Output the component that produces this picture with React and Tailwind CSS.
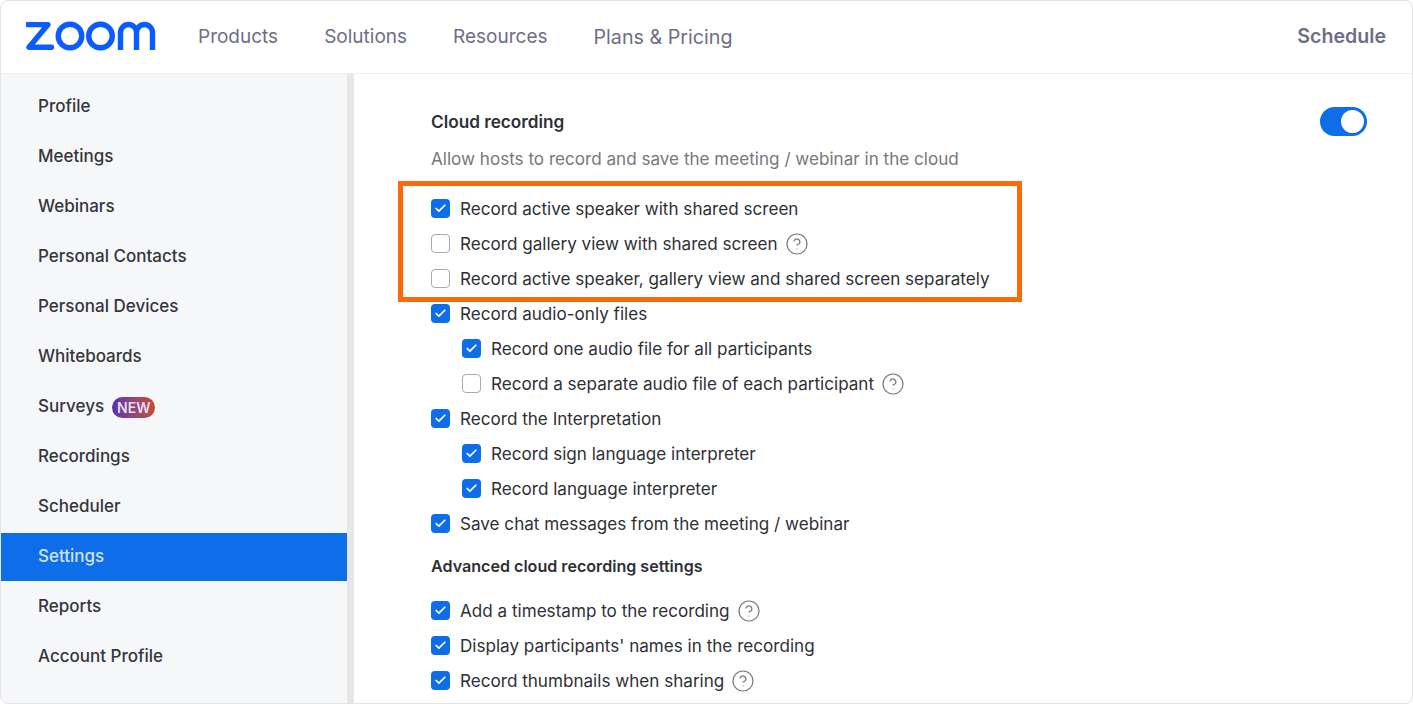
import { CircleHelp, Check } from "lucide-react";

const navItems = ["Products", "Solutions", "Resources"];

const sideItems = [
  "Profile",
  "Meetings",
  "Webinars",
  "Personal Contacts",
  "Personal Devices",
  "Whiteboards",
  "Surveys",
  "Recordings",
  "Scheduler",
  "Settings",
  "Reports",
  "Account Profile",
];

function ZoomLogo() {
  return (
    <svg width="130" height="30" viewBox="0 0 130 30" fill="none" stroke="#0b5cff" strokeWidth="5.4" className="mb-[3px]">
      <path d="M1.500 3.600h20.500L3 26.300h22.500" strokeLinejoin="round" strokeLinecap="round" />
      <circle cx="44" cy="15" r="11.800" />
      <circle cx="74.500" cy="15" r="11.800" />
      <path d="M94.500 29V11.500a8 8 0 0 1 16 0V29M110.500 11.500a8 8 0 0 1 16 0V29" />
    </svg>
  );
}

function Box({ checked }) {
  if (checked) {
    return (
      <span className="flex h-[19px] w-[19px] shrink-0 items-center justify-center rounded-[4px] bg-[#0e6de8]">
        <Check size={13} color="#ffffff" strokeWidth={3.2} />
      </span>
    );
  }
  return <span className="h-[19px] w-[19px] shrink-0 rounded-[4px] border border-[#a9a9ad] bg-white" />;
}

function Option({ label, checked = true, help = false, nested = false }) {
  return (
    <div className={`flex h-[35px] items-center ${nested ? "pl-[31px]" : ""}`}>
      <Box checked={checked} />
      <span className="ml-[10px] whitespace-nowrap text-[17.1px] text-[#2f2f36]">{label}</span>
      {help && <CircleHelp size={24} color="#77777c" strokeWidth={1.2} className="ml-[7px] shrink-0" />}
    </div>
  );
}

export default function App() {
  return (
    <div className="h-[704px] w-[1413px] overflow-hidden bg-white font-['Inter',sans-serif]">
      <div className="flex h-[704px] flex-col overflow-hidden rounded-[8px] border border-[#e4e4e6]">
        <header className="flex h-[73px] shrink-0 items-center border-b border-[#eeeeef] pl-[25px] pr-[26px]">
          <ZoomLogo />
          <nav className="ml-[42px] flex items-center gap-[46px] text-[19px] text-[#6d6e86]">
            {navItems.map((item) => (
              <span key={item}>{item}</span>
            ))}
            <span className="mt-[2px] text-[19.7px]">Plans &amp; Pricing</span>
          </nav>
          <span className="ml-auto text-[19.6px] font-semibold text-[#6d6e86]">Schedule</span>
        </header>

        <div className="flex min-h-0 flex-1">
          <aside className="w-[353px] shrink-0 border-r-[7px] border-[#e6e6e7] bg-[#f6f7f9] pt-[7px]">
            {sideItems.map((item) => (
              <div key={item} className="flex h-[50px] items-end">
                <div
                  className={`flex h-[48px] w-full items-center pl-[37px] text-[17px] font-medium ${
                    item === "Settings" ? "bg-[#0e6de8] text-[#cfe2fb]" : "text-[#35353c]"
                  }`}
                >
                  {item}
                  {item === "Surveys" && (
                    <span className="ml-[8px] rounded-full bg-linear-to-r from-[#5b2fa8] to-[#c9482a] px-[5px] text-[14px] leading-[21px] font-semibold text-[#e6dcf5]">
                      NEW
                    </span>
                  )}
                </div>
              </div>
            ))}
          </aside>

          <main className="min-w-0 flex-1 pt-[36px] pl-[77px] pr-[45px]">
            <div className="flex items-start justify-between">
              <div>
                <h2 className="text-[17.2px] leading-[24px] font-semibold text-[#2f2f36]">Cloud recording</h2>
                <p className="mt-[13px] text-[17.1px] leading-[24px] text-[#77777c]">
                  Allow hosts to record and save the meeting / webinar in the cloud
                </p>
              </div>
              <div className="-mt-[3px] flex h-[29px] w-[47px] items-center justify-end rounded-full bg-[#0e6de8] pr-[3px]">
                <span className="h-[23px] w-[23px] rounded-full bg-white" />
              </div>
            </div>

            <div className="relative mt-[20px]">
              <div className="pointer-events-none absolute -top-[10px] -left-[33px] h-[121px] w-[624px] border-[5px] border-[#f9690e]" />
              <Option label="Record active speaker with shared screen" />
              <Option label="Record gallery view with shared screen" checked={false} help />
              <Option label="Record active speaker, gallery view and shared screen separately" checked={false} />
              <Option label="Record audio-only files" />
              <Option label="Record one audio file for all participants" nested />
              <Option label="Record a separate audio file of each participant" checked={false} help nested />
              <Option label="Record the Interpretation" />
              <Option label="Record sign language interpreter" nested />
              <Option label="Record language interpreter" nested />
              <Option label="Save chat messages from the meeting / webinar" />
            </div>

            <h3 className="mt-[13px] mb-[15px] text-[16.1px] leading-[24px] font-semibold text-[#2f2f36]">
              Advanced cloud recording settings
            </h3>
            <Option label="Add a timestamp to the recording" help />
            <Option label="Display participants' names in the recording" />
            <Option label="Record thumbnails when sharing" help />
          </main>
        </div>
      </div>
    </div>
  );
}
